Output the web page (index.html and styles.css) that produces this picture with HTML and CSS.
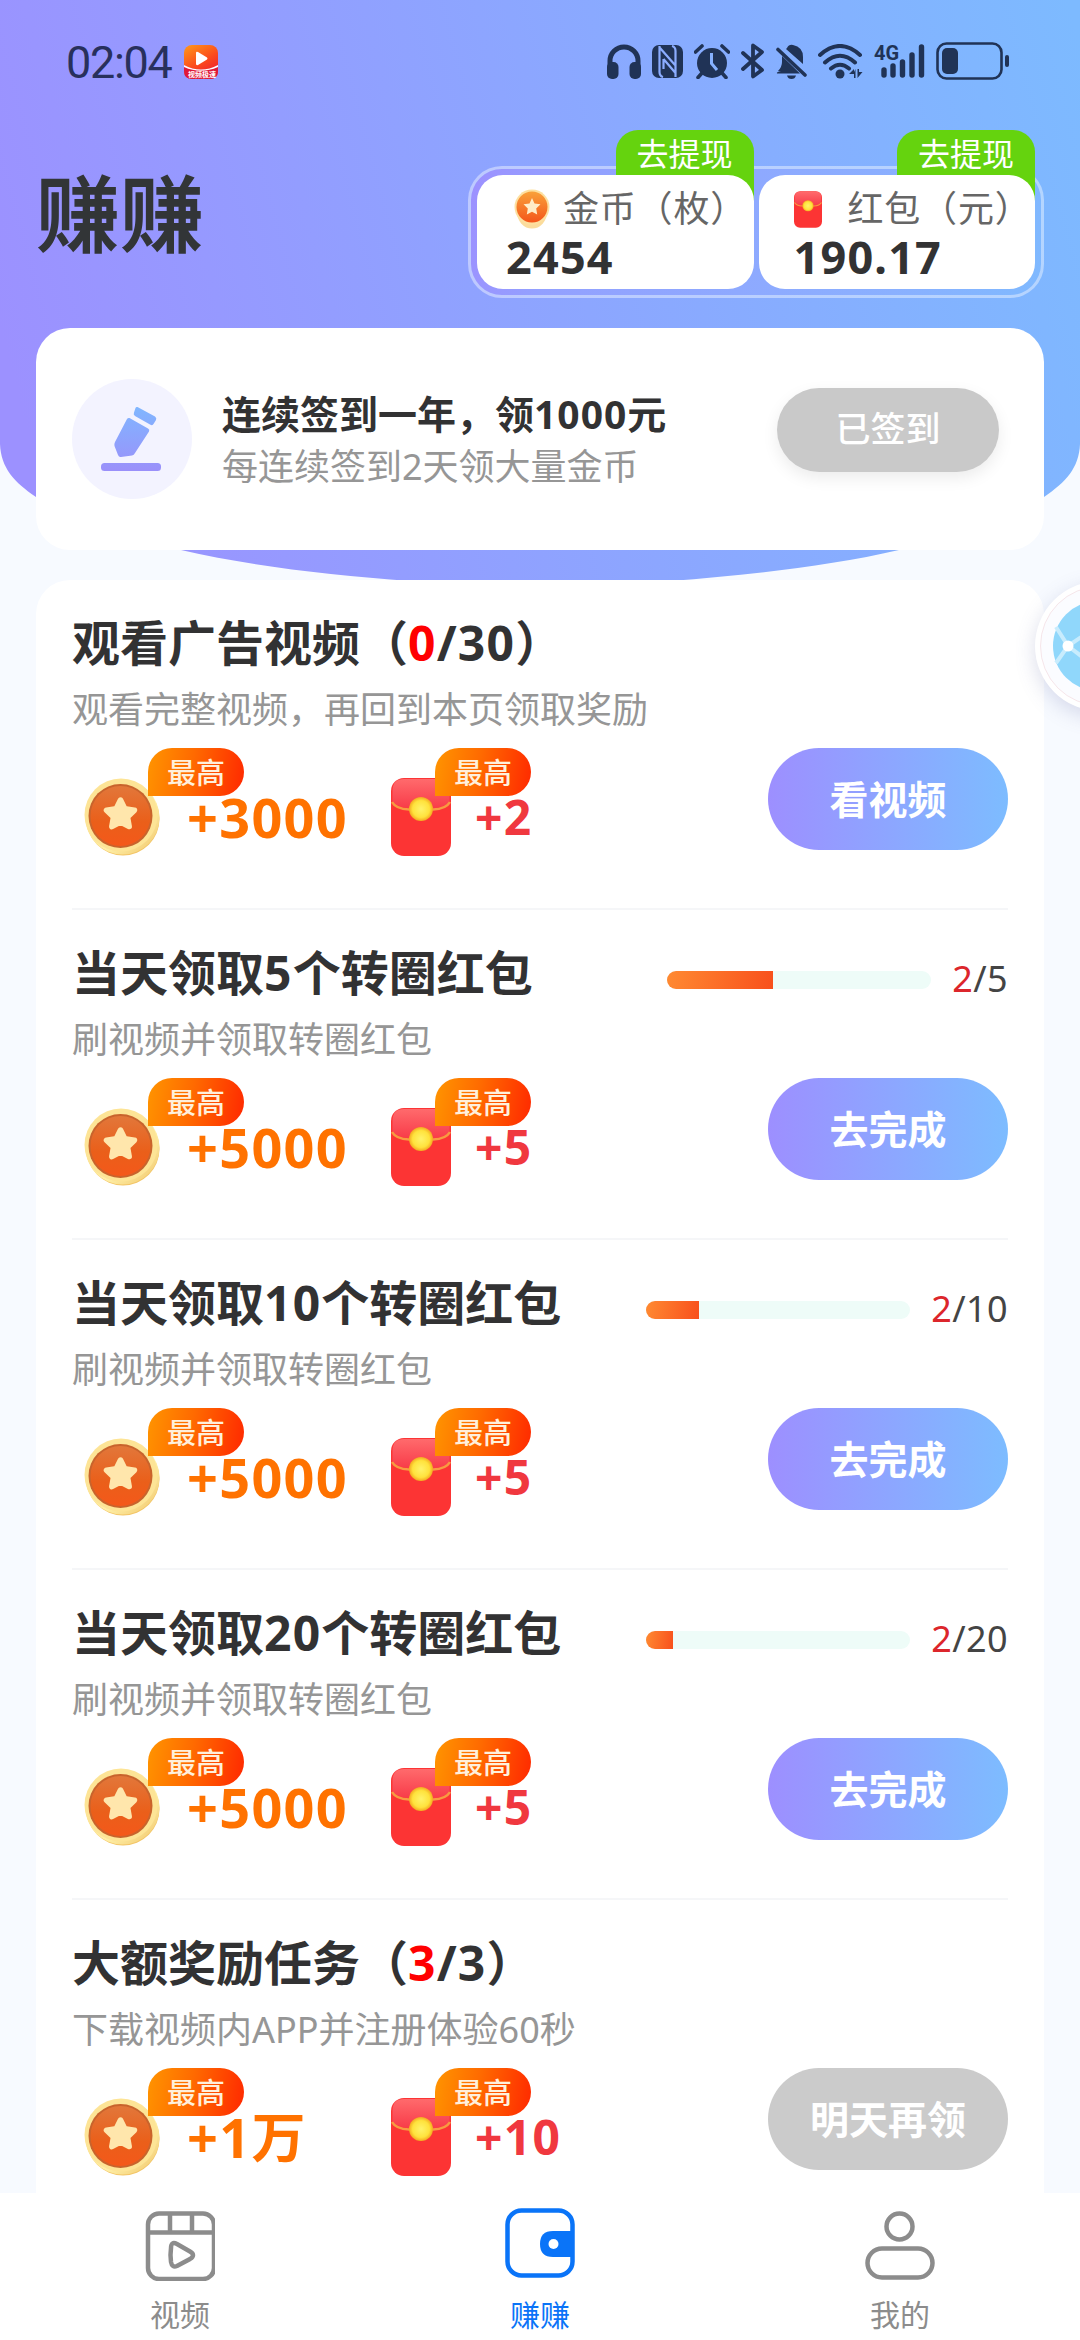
FILE: index.html
```html
<!DOCTYPE html>
<html lang="zh-CN">
<head>
<meta charset="utf-8">
<title>赚赚</title>
<link rel="stylesheet" href="styles.css">
</head>
<body>
<svg class="defs" width="0" height="0" aria-hidden="true">
  <defs>
    <linearGradient id="gold" x1="0" y1="0" x2="1" y2="1"><stop offset="0" stop-color="#f8d478"/><stop offset=".6" stop-color="#fff0a8"/><stop offset="1" stop-color="#f0c468"/></linearGradient>
    <linearGradient id="coinface" x1="0" y1="0" x2="0" y2="1"><stop offset="0" stop-color="#e2773a"/><stop offset=".6" stop-color="#ea5f1a"/><stop offset="1" stop-color="#f4581a"/></linearGradient>
    <linearGradient id="minicoin" x1="0" y1="0" x2="0" y2="1"><stop offset="0" stop-color="#f9a13a"/><stop offset="1" stop-color="#f4561a"/></linearGradient>
    <linearGradient id="flap" x1="0" y1="0" x2="0" y2="1"><stop offset="0" stop-color="#ff6a6c"/><stop offset="1" stop-color="#f83a48"/></linearGradient>
    <radialGradient id="seal"><stop offset="0" stop-color="#fff36a"/><stop offset=".7" stop-color="#ffe23c"/><stop offset="1" stop-color="#f4a820"/></radialGradient>
    <linearGradient id="pen" gradientUnits="userSpaceOnUse" x1="0" y1="0" x2="0" y2="64"><stop offset="0" stop-color="#80b7ff"/><stop offset="1" stop-color="#9a90fa"/></linearGradient>
    <linearGradient id="app" x1="0" y1="0" x2=".6" y2="1"><stop offset="0" stop-color="#ff9a1a"/><stop offset=".6" stop-color="#fb4a1c"/><stop offset="1" stop-color="#ee2030"/></linearGradient>
    <linearGradient id="sky" gradientUnits="userSpaceOnUse" x1="0" y1="330" x2="1080" y2="40"><stop offset="0" stop-color="#9c91ff"/><stop offset="1" stop-color="#7dbaff"/></linearGradient>
    <symbol id="coin" viewBox="0 0 76 78">
      <circle cx="39" cy="41" r="36.500" fill="#f3c566"/>
      <circle cx="38.500" cy="39.500" r="37" fill="url(#gold)"/>
      <circle cx="37" cy="37" r="36.500" fill="#fde496"/>
      <circle cx="36.500" cy="38" r="32" fill="#c8632c"/>
      <circle cx="36.500" cy="38" r="30" fill="url(#coinface)"/>
      <path d="M36.500 22l4.300 8.800 9.700 1.400-7 6.800 1.700 9.600-8.700-4.600-8.700 4.600 1.700-9.600-7-6.800 9.700-1.400z" fill="#ffe6ac" stroke="#ffe6ac" stroke-width="5.500" stroke-linejoin="round"/>
    </symbol>
    <symbol id="envelope" viewBox="0 0 60 78">
      <rect width="60" height="78" rx="13" fill="#fc3434"/>
      <path d="M1.500 12Q2 1 13 1H47Q58 1 58.500 12V24Q52 31 30 31T1.500 24z" fill="url(#flap)"/>
      <path d="M1 24Q5 31 18 31.500H42Q55 31 59 24" fill="none" stroke="#f89a42" stroke-width="2.500"/>
      <circle cx="30" cy="31" r="12" fill="url(#seal)"/>
    </symbol>
  </defs>
</svg>

<div class="screen">
  <svg class="backdrop" width="1080" height="590" viewBox="0 0 1080 590">
    <path fill="url(#sky)" d="M0 0H1080V444C1079 468 1066 482 1044 497C1000 525 900 550 899 550C830 566 750 575 670 581C580 588 500 588 410 581C330 575 250 566 181 550C120 538 70 521 36 497C14 482 1 468 0 444z"/>
  </svg>

  <header class="statusbar">
    <span class="clock">02:04</span>
    <svg class="appicon" width="34" height="34" viewBox="0 0 34 34">
      <rect width="34" height="34" rx="8" fill="url(#app)"/>
      <path d="M0 20Q17 29 34 20V26Q34 34 26 34H8Q0 34 0 26z" fill="#df1838"/>
      <path d="M0 20Q17 29 34 20V22Q17 29.500 0 22z" fill="#fff"/>
      <path d="M12 8Q12 6 14 7L23 12.500Q24 13.500 23 14.500L14 20Q12 20.500 12 19z" fill="#fff"/>
      <text x="4" y="32" class="applabel">视频极速</text>
    </svg>
    <div class="indicators">
      <svg width="34" height="35" viewBox="0 0 34 35"><path d="M3 25V17a14 14 0 0 1 28 0V25" fill="none" stroke="currentColor" stroke-width="5"/><rect x="0" y="18" width="11.500" height="17" rx="5" fill="currentColor"/><rect x="22.500" y="18" width="11.500" height="17" rx="5" fill="currentColor"/></svg>
      <svg width="31" height="33" viewBox="0 0 31 33"><rect width="31" height="33" rx="7" fill="currentColor"/><path d="M7.500 1V27Q7.500 31 11 32M23.500 32V6Q23.500 2 20 1M8 3L23 20M11.500 14L23.500 28M11.500 14V24" fill="none" stroke="#8cadff" stroke-width="2.200"/></svg>
      <svg width="36" height="35" viewBox="0 0 36 35"><circle cx="18" cy="19" r="15" fill="currentColor"/><path d="M1.500 8L8 2M34.500 8L28 2M8 29L4 33.500M28 29L32 33.500" stroke="currentColor" stroke-width="3.600" stroke-linecap="round"/><path d="M17.500 9V19.500L23 26" fill="none" stroke="#86b1ff" stroke-width="3"/></svg>
      <svg width="24" height="36" viewBox="0 0 24 36"><path d="M2 10L21 27L12 33.500V2.500L21 9L2 26" fill="none" stroke="currentColor" stroke-width="3.800" stroke-linejoin="round" stroke-linecap="round"/></svg>
      <svg width="31" height="35" viewBox="0 0 31 35"><path d="M5 27Q0 28 1 29.500H24L6 12V18Q6 23 2 27zM11 4Q13 0 17 1Q27 3 27 13V20L10 5zM11 31.500H20Q19 35 15.500 35T11 31.500z" fill="currentColor"/><path d="M2 5.500L29 31" stroke="currentColor" stroke-width="3.600" stroke-linecap="round"/></svg>
      <svg width="45" height="35" viewBox="0 0 45 35"><path d="M2 11Q22 -7 42 11M7 18.500Q22 5 37 18.500M13 24.500Q22 17 31 24.500" fill="none" stroke="currentColor" stroke-width="4" stroke-linecap="round"/><circle cx="22" cy="30" r="4.500" fill="currentColor"/><path d="M31 30h5v-5zm5-2v6h1.500v-9zm3.500-3v9l5-6h-3.500v-3z" fill="currentColor"/></svg>
      <svg class="signal" width="51" height="36" viewBox="0 0 51 36"><text x="0" y="17" class="netlabel">4G</text><path d="M10 27v5M19 23v9M28.500 19v13M38 12v20M47.500 4v28" stroke="currentColor" stroke-width="5.400" stroke-linecap="round"/></svg>
      <svg width="74" height="38" viewBox="0 0 74 38"><rect x="1.500" y="1.500" width="64" height="35" rx="9" fill="none" stroke="currentColor" stroke-width="2.600"/><rect x="6" y="6" width="16" height="26" rx="5" fill="currentColor"/><rect x="69" y="13" width="4" height="12" rx="2" fill="currentColor"/></svg>
    </div>
  </header>

  <section class="topline">
    <h1>赚赚</h1>
    <div class="wallet">
      <div class="balance">
        <span class="withdraw">去提现</span>
        <div class="face">
          <div class="kind"><svg class="minicoin" width="36" height="40" viewBox="0 0 36 40"><ellipse cx="18" cy="23" rx="15" ry="16.500" fill="#fbdc9c"/><circle cx="18" cy="18" r="17.500" fill="#fde0a0"/><circle cx="18" cy="18" r="15.500" fill="url(#minicoin)"/><path d="M18 9l2.500 5.500 6 .8-4.300 4.200 1 6-5.200-2.800-5.200 2.800 1-6-4.300-4.200 6-.8z" fill="#ffedc8"/></svg><span>金币（枚）</span></div>
          <strong>2454</strong>
        </div>
      </div>
      <div class="balance">
        <span class="withdraw">去提现</span>
        <div class="face second">
          <div class="kind"><svg width="28" height="37"><use href="#envelope" width="28" height="37"/></svg><span class="wide">红包（元）</span></div>
          <strong>190.17</strong>
        </div>
      </div>
    </div>
  </section>

  <section class="checkin">
    <div class="badge"><svg width="62" height="66" viewBox="0 0 62 66"><g fill="url(#pen)"><path d="M28.500 12L47 22.500Q49 23.500 48 25.500L34 47Q33 49 31 49.500L20 51Q18 51.500 17 49L13.500 40Q13 38 14 36L26 13Q27 11.500 28.500 12z"/><path d="M36.500 1L54 10.500Q56 12 55 14L52.500 18Q51.500 20 49 18.500L34 10Q32 8.500 33 6.500L34.500 2Q35 .5 36.500 1z"/><rect x="0" y="57" width="60" height="8" rx="3.500"/></g></svg></div>
    <div class="words">
      <h2>连续签到一年，领<b>1000</b>元</h2>
      <p>每连续签到2天领大量金币</p>
    </div>
    <button class="signed">已签到</button>
  </section>

  <main class="tasks">
    <article class="task">
      <div class="head"><h3>观看广告视频<span class="open">（</span><b><i>0</i>/30</b><span class="close">）</span></h3></div>
      <p>观看完整视频，再回到本页领取奖励</p>
      <div class="rewards">
        <div class="reward coins"><svg width="76" height="78"><use href="#coin"/></svg><em>最高</em><strong>+3000</strong></div>
        <div class="reward cash"><svg width="60" height="78"><use href="#envelope"/></svg><em>最高</em><strong>+2</strong></div>
        <button>看视频</button>
      </div>
    </article>
    <article class="task">
      <div class="head"><h3>当天领取<b>5</b>个转圈红包</h3><div class="bar"><div class="fill" style="width:40%"></div></div><span class="count"><i>2</i>/5</span></div>
      <p>刷视频并领取转圈红包</p>
      <div class="rewards">
        <div class="reward coins"><svg width="76" height="78"><use href="#coin"/></svg><em>最高</em><strong>+5000</strong></div>
        <div class="reward cash"><svg width="60" height="78"><use href="#envelope"/></svg><em>最高</em><strong>+5</strong></div>
        <button>去完成</button>
      </div>
    </article>
    <article class="task">
      <div class="head"><h3>当天领取<b>10</b>个转圈红包</h3><div class="bar"><div class="fill" style="width:20%"></div></div><span class="count"><i>2</i>/10</span></div>
      <p>刷视频并领取转圈红包</p>
      <div class="rewards">
        <div class="reward coins"><svg width="76" height="78"><use href="#coin"/></svg><em>最高</em><strong>+5000</strong></div>
        <div class="reward cash"><svg width="60" height="78"><use href="#envelope"/></svg><em>最高</em><strong>+5</strong></div>
        <button>去完成</button>
      </div>
    </article>
    <article class="task">
      <div class="head"><h3>当天领取<b>20</b>个转圈红包</h3><div class="bar"><div class="fill" style="width:10%"></div></div><span class="count"><i>2</i>/20</span></div>
      <p>刷视频并领取转圈红包</p>
      <div class="rewards">
        <div class="reward coins"><svg width="76" height="78"><use href="#coin"/></svg><em>最高</em><strong>+5000</strong></div>
        <div class="reward cash"><svg width="60" height="78"><use href="#envelope"/></svg><em>最高</em><strong>+5</strong></div>
        <button>去完成</button>
      </div>
    </article>
    <article class="task">
      <div class="head"><h3>大额奖励任务<span class="open">（</span><b><i>3</i>/3</b><span class="close">）</span></h3></div>
      <p>下载视频内APP并注册体验60秒</p>
      <div class="rewards">
        <div class="reward coins"><svg width="76" height="78"><use href="#coin"/></svg><em>最高</em><strong>+1万</strong></div>
        <div class="reward cash"><svg width="60" height="78"><use href="#envelope"/></svg><em>最高</em><strong>+10</strong></div>
        <button class="later">明天再领</button>
      </div>
    </article>
  </main>

  <nav class="tabs">
    <a class="tab"><svg width="70" height="70" viewBox="0 0 70 70" fill="none" stroke="currentColor" stroke-width="4.500"><rect x="3" y="2.500" width="66" height="65.500" rx="11"/><path d="M3 21.500H69M25 2V21M47 2V21"/><path d="M26 37Q26 30 32 33L45 40.500Q51 44 45 48L32 55Q27 57 26 51Q25 44 26 37z"/></svg><span>视频</span></a>
    <a class="tab active"><svg width="70" height="70" viewBox="0 0 70 70" fill="none"><rect x="2.500" y="2.500" width="65" height="65" rx="14" stroke="currentColor" stroke-width="4.500"/><path d="M69 23H48Q35 23 35 36T48 49H69z" fill="currentColor"/><circle cx="48.500" cy="36" r="5" fill="#fff"/></svg><span>赚赚</span></a>
    <a class="tab"><svg width="70" height="70" viewBox="0 0 70 70" fill="none" stroke="currentColor" stroke-width="4.500"><circle cx="34.500" cy="15.500" r="13"/><rect x="2.500" y="37.500" width="65" height="29" rx="14.500"/></svg><span>我的</span></a>
  </nav>

  <div class="floater">
    <svg width="94" height="94" viewBox="0 0 94 94"><circle cx="47" cy="47" r="45" fill="#90d7fb"/><path d="M5 28L17 47L5 64M17 47L42 66M17 47L42 30" fill="none" stroke="#c8ecfd" stroke-width="4"/><circle cx="17" cy="47" r="5.500" fill="#fff"/></svg>
  </div>
</div>
</body>
</html>
```
FILE: styles.css
```css
* { box-sizing: border-box; margin: 0; padding: 0; }
html, body { width: 1080px; height: 2340px; overflow: hidden; }
body { font-family: "Noto Sans", "Noto Sans CJK SC", sans-serif; color: #323233; background: #f7faff; }
svg { display: block; flex: none; }
i, em { font-style: normal; }
h1, h2, h3, b, strong { font-weight: 700; }
button { border: 0; font: inherit; color: #fff; }
.defs { position: absolute; }
.screen { position: relative; width: 1080px; height: 2340px; overflow: hidden; display: flex; flex-direction: column; }
.backdrop { position: absolute; left: 0; top: 0; }

.statusbar { position: relative; height: 122px; padding: 0 70px 0 66px; display: flex; align-items: center; color: #203356; }
.clock { font: 400 45px/60px "Roboto", sans-serif; letter-spacing: -1.300px; color: #28305c; padding-top: 3px; width: 118px; }
.appicon { margin-top: 2px; }
.applabel { font: 700 7px "Noto Sans CJK SC", sans-serif; fill: #fff; }
.indicators { margin-left: auto; display: flex; align-items: center; gap: 11px; }
.signal { overflow: visible; }
.netlabel { font: 700 20px "Roboto", sans-serif; fill: currentColor; }

.topline { position: relative; height: 206px; padding: 0 36px; display: flex; justify-content: space-between; }
.topline h1 { font-size: 84px; line-height: 100px; margin-top: 42px; color: #323537; }
.wallet { width: 576px; height: 132px; margin-top: 44px; padding: 7px 6px; display: flex; gap: 5px; border: 3px solid rgba(255,255,255,.42); border-radius: 34px; background: linear-gradient(100deg, #9d90ff 0%, #93a0ff 15%, #8ab0ff 75%, #7fb9ff 100%); background-clip: padding-box; }
.balance { position: relative; flex: 1; }
.withdraw { position: absolute; right: 0; top: -46px; width: 138px; height: 80px; border-radius: 22px 22px 0 0; background: #65d30e; color: #fff; font-size: 32px; line-height: 48px; text-align: center; }
.face { position: relative; height: 114px; margin-top: -1px; border-radius: 26px; background: #fff; padding: 14px 0 0 29px; }
.face.second { padding-left: 35px; }
.kind { height: 40px; display: flex; align-items: center; color: #666; font-size: 36px; }
.kind span { margin-left: 13px; line-height: 40px; letter-spacing: .8px; white-space: nowrap; }
.kind .wide { margin-left: 26px; }
.minicoin { margin-left: 8px; }
.face strong { display: block; font-size: 45px; line-height: 56px; letter-spacing: 1.200px; }

.checkin { position: relative; margin: 0 36px; height: 222px; padding: 0 45px 0 36px; border-radius: 34px; background: #fff; display: flex; align-items: center; }
.badge { width: 120px; height: 120px; border-radius: 50%; background: #f3f3ff; display: flex; align-items: center; justify-content: center; flex: none; }
.words { margin-left: 30px; flex: 1; }
.words h2 { font-size: 39px; line-height: 55px; white-space: nowrap; }
.words h2 b { letter-spacing: 1px; }
.words p { font-size: 36px; line-height: 51px; color: #969696; white-space: nowrap; }
.signed { width: 222px; height: 84px; border-radius: 42px; background: #c9c9c9; font-size: 35px; font-weight: 500; line-height: 80px; padding-bottom: 2px; margin-bottom: 19px; box-shadow: 0 6px 16px rgba(0,0,0,.08); }

.tasks { position: relative; margin: 30px 36px 0; height: 1613px; flex: none; padding: 0 36px; border-radius: 34px 34px 0 0; background: #fff; overflow: hidden; }
.task { height: 330px; padding-top: 30px; border-bottom: 2px solid #f5f6f8; }
.head { height: 66px; display: flex; align-items: center; }
.head h3 { font-size: 48px; line-height: 66px; white-space: nowrap; margin-right: auto; }
.head b { letter-spacing: 1.200px; }
.head b i { color: #f00; }
.bar { width: 264px; height: 18px; border-radius: 9px; background: #eefcf8; overflow: hidden; margin-top: 14px; }
.fill { height: 100%; background: linear-gradient(100deg, #ff8a32, #f8501c); }
.count { margin-left: 21px; margin-top: 12px; font-size: 36px; line-height: 50px; letter-spacing: .4px; color: #444; }
.count i { color: #dc262c; }
.task p { font-size: 36px; line-height: 66px; padding-top: 1px; color: #969696; white-space: nowrap; }
.rewards { display: flex; height: 110px; margin-top: 5px; position: relative; }
.reward { position: relative; display: flex; padding-top: 30px; }
.coins { margin-left: 12px; width: 307px; color: #ff7200; }
.reward em { position: absolute; top: 0; left: 64px; width: 96px; height: 48px; border-radius: 24px 24px 24px 0; background: linear-gradient(100deg, #ff9500, #ff6a00 45%, #ff2800); color: #fff0dc; font-size: 29px; font-weight: 500; line-height: 50px; text-align: center; }
.cash em { left: 44px; }
.reward strong { font-size: 54px; line-height: 78px; letter-spacing: 1.300px; margin-left: 27px; white-space: nowrap; }
.cash { color: #f0383f; }
.cash strong { font-size: 48px; margin-left: 24px; }
.rewards button { margin-left: auto; width: 240px; height: 102px; padding-bottom: 4px; border-radius: 51px; background: linear-gradient(90deg, #9d8fff, #7dbcff); font-size: 39px; font-weight: 700; }
.rewards .later { background: #cbcbcb; }

.tabs { position: relative; flex: 1; background: #fff; display: flex; }
.tab { flex: 1; display: flex; flex-direction: column; align-items: center; padding-top: 18px; color: #8c8c8c; font-size: 30px; }
.tab span { line-height: 42px; margin-top: 13px; }
.tab.active { color: #0a74f8; }
.tab.active svg { margin: -3px 0 3px; }

.floater { position: absolute; left: 1035px; top: 581px; width: 130px; height: 130px; border-radius: 50%; background: #fff; box-shadow: 0 6px 20px rgba(90,100,160,.22); }
.floater::before { content: ""; position: absolute; inset: 5px; border: 1px solid #f6e6ea; border-radius: 50%; background: #fbfcff; }
.floater svg { position: relative; margin: 18px 0 0 16px; }
```
